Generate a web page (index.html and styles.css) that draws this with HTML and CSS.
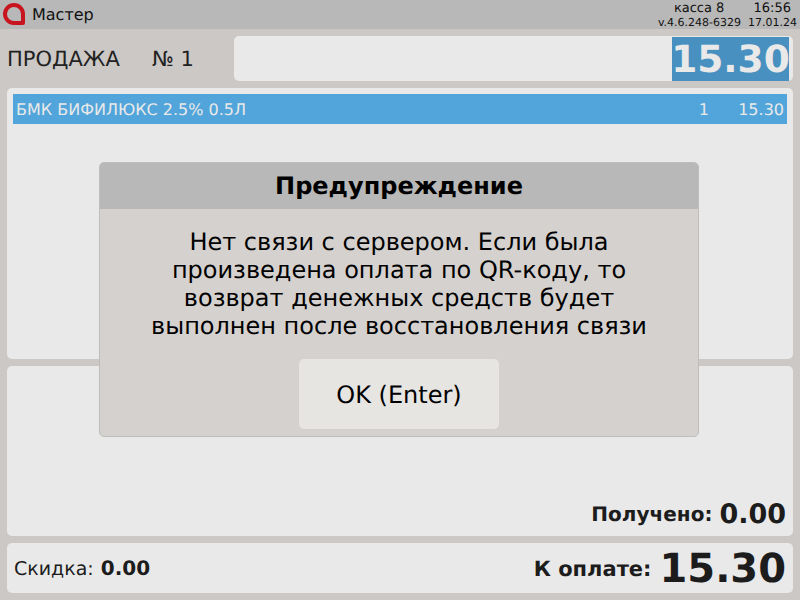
FILE: index.html
```html
<!DOCTYPE html>
<html lang="ru">
<head>
<meta charset="utf-8">
<title>Мастер</title>
<link rel="stylesheet" href="styles.css">
</head>
<body>
<header class="topbar">
  <svg class="logo" width="22" height="22" viewBox="0 0 22 22"><path class="logo-mark" d="M20 20H11A9 9 0 1 1 20 11Z"/></svg>
  <span class="app-name">Мастер</span>
  <div class="status">
    <div class="status-row status-top"><span class="till">касса 8</span><span class="time">16:56</span></div>
    <div class="status-row status-bottom"><span>v.4.6.248-6329</span><span>17.01.24</span></div>
  </div>
</header>
<main class="content">
  <section class="sale-row">
    <div class="sale-title"><span class="sale-label">ПРОДАЖА</span><span class="sale-no">№ 1</span></div>
    <div class="total-box"><span class="total-value">15.30</span></div>
  </section>
  <section class="panel items">
    <div class="item"><span class="item-name">БМК БИФИЛЮКС 2.5% 0.5Л</span><span class="item-qty">1</span><span class="item-sum">15.30</span></div>
  </section>
  <section class="panel received">
    <span class="received-label">Получено:</span><span class="received-value">0.00</span>
  </section>
  <section class="panel pay">
    <div class="discount">Скидка: <b class="discount-value">0.00</b></div>
    <div class="due"><span class="due-label">К оплате:</span><span class="due-value">15.30</span></div>
  </section>
</main>
<div class="modal">
  <div class="modal-title">Предупреждение</div>
  <div class="modal-body">
    <p class="modal-text">Нет связи с сервером. Если была<br>произведена оплата по QR-коду, то<br>возврат денежных средств будет<br>выполнен после восстановления связи</p>
    <button class="modal-btn">OK (Enter)</button>
  </div>
</div>
</body>
</html>
```
FILE: styles.css
```css
* { box-sizing: border-box; }
html, body { margin: 0; height: 100%; }
body {
  width: 800px;
  height: 600px;
  overflow: hidden;
  position: relative;
  background: #cbc8c5;
  color: #1c1c1c;
  font-family: "DejaVu Sans", sans-serif;
  text-rendering: geometricPrecision;
}
.topbar {
  height: 29px;
  background: #b8b8b8;
  display: flex;
  align-items: center;
  padding: 0 3px 0 3px;
  color: #111;
}
.logo { flex: none; margin-top: -1px; }
.logo-mark { fill: none; stroke: #c8141e; stroke-width: 4; stroke-linejoin: round; }
.app-name { font-size: 16px; margin-left: 7px; }
.status { margin-left: auto; font-size: 11px; line-height: 14px; padding-top: 1px; }
.status-row { display: flex; justify-content: space-between; }
.status-top { font-size: 13px; line-height: 15px; padding: 0 6px 0 16px; }
.status-bottom { gap: 7px; line-height: 13px; }
.content {
  height: 571px;
  padding: 7px;
  display: flex;
  flex-direction: column;
  gap: 7px;
}
.sale-row { height: 45px; display: flex; align-items: stretch; }
.sale-title {
  width: 227px;
  display: flex;
  align-items: center;
  font-size: 21px;
  color: #222;
}
.sale-label { width: 145px; }
.total-box {
  flex: 1;
  background: #e9e9e9;
  border-radius: 5px;
  display: flex;
  justify-content: flex-end;
  padding: 1px 4px 0 0;
}
.total-value {
  width: 117px;
  background: #4790bf;
  color: #e9e9e9;
  font-size: 37.5px;
  font-weight: 700;
  line-height: 44px;
  display: flex;
  justify-content: center;
}
.panel { background: #e9e9e9; border-radius: 5px; }
.items { height: 271px; padding: 6px; }
.item {
  height: 30px;
  background: #52a5da;
  color: #e9e9e9;
  font-size: 16px;
  display: flex;
  align-items: center;
  padding: 0 3px;
}
.item-name { flex: 1; }
.item-sum { width: 46px; margin-left: 29px; text-align: right; }
.received {
  height: 170px;
  display: flex;
  justify-content: flex-end;
  align-items: flex-end;
  gap: 7px;
  padding: 0 7px 6px 0;
}
.received-label { font-size: 20px; font-weight: 700; line-height: 24px; padding-bottom: 4px; }
.received-value { font-size: 27px; font-weight: 700; line-height: 30px; }
.pay {
  height: 50px;
  display: flex;
  justify-content: space-between;
  align-items: center;
  padding: 0 7px;
}
.discount { font-size: 19px; }
.discount-value { margin-left: 1px; font-size: 20px; }
.due { display: flex; align-items: center; gap: 8px; padding-top: 2px; }
.due-label { font-size: 21px; font-weight: 700; }
.due-value { font-size: 40px; font-weight: 700; line-height: 48px; }
.modal {
  position: absolute;
  left: 99px;
  top: 162px;
  width: 600px;
  height: 275px;
  background: #d5d1ce;
  border: 1px solid #bdbdbd;
  border-radius: 5px;
  overflow: hidden;
  color: #000;
}
.modal-title {
  height: 46px;
  background: #b8b8b8;
  font-size: 24px;
  font-weight: 700;
  line-height: 47px;
  text-align: center;
}
.modal-body { display: flex; flex-direction: column; align-items: center; }
.modal-text {
  margin: 19px 0 0;
  font-size: 24px;
  line-height: 28px;
  text-align: center;
}
.modal-btn {
  width: 200px;
  height: 70px;
  margin-top: 19px;
  padding: 2px 0 0;
  border: 0;
  border-radius: 5px;
  background: #e6e5e2;
  color: #000;
  font-family: inherit;
  font-size: 24px;
  text-rendering: inherit;
}
```
